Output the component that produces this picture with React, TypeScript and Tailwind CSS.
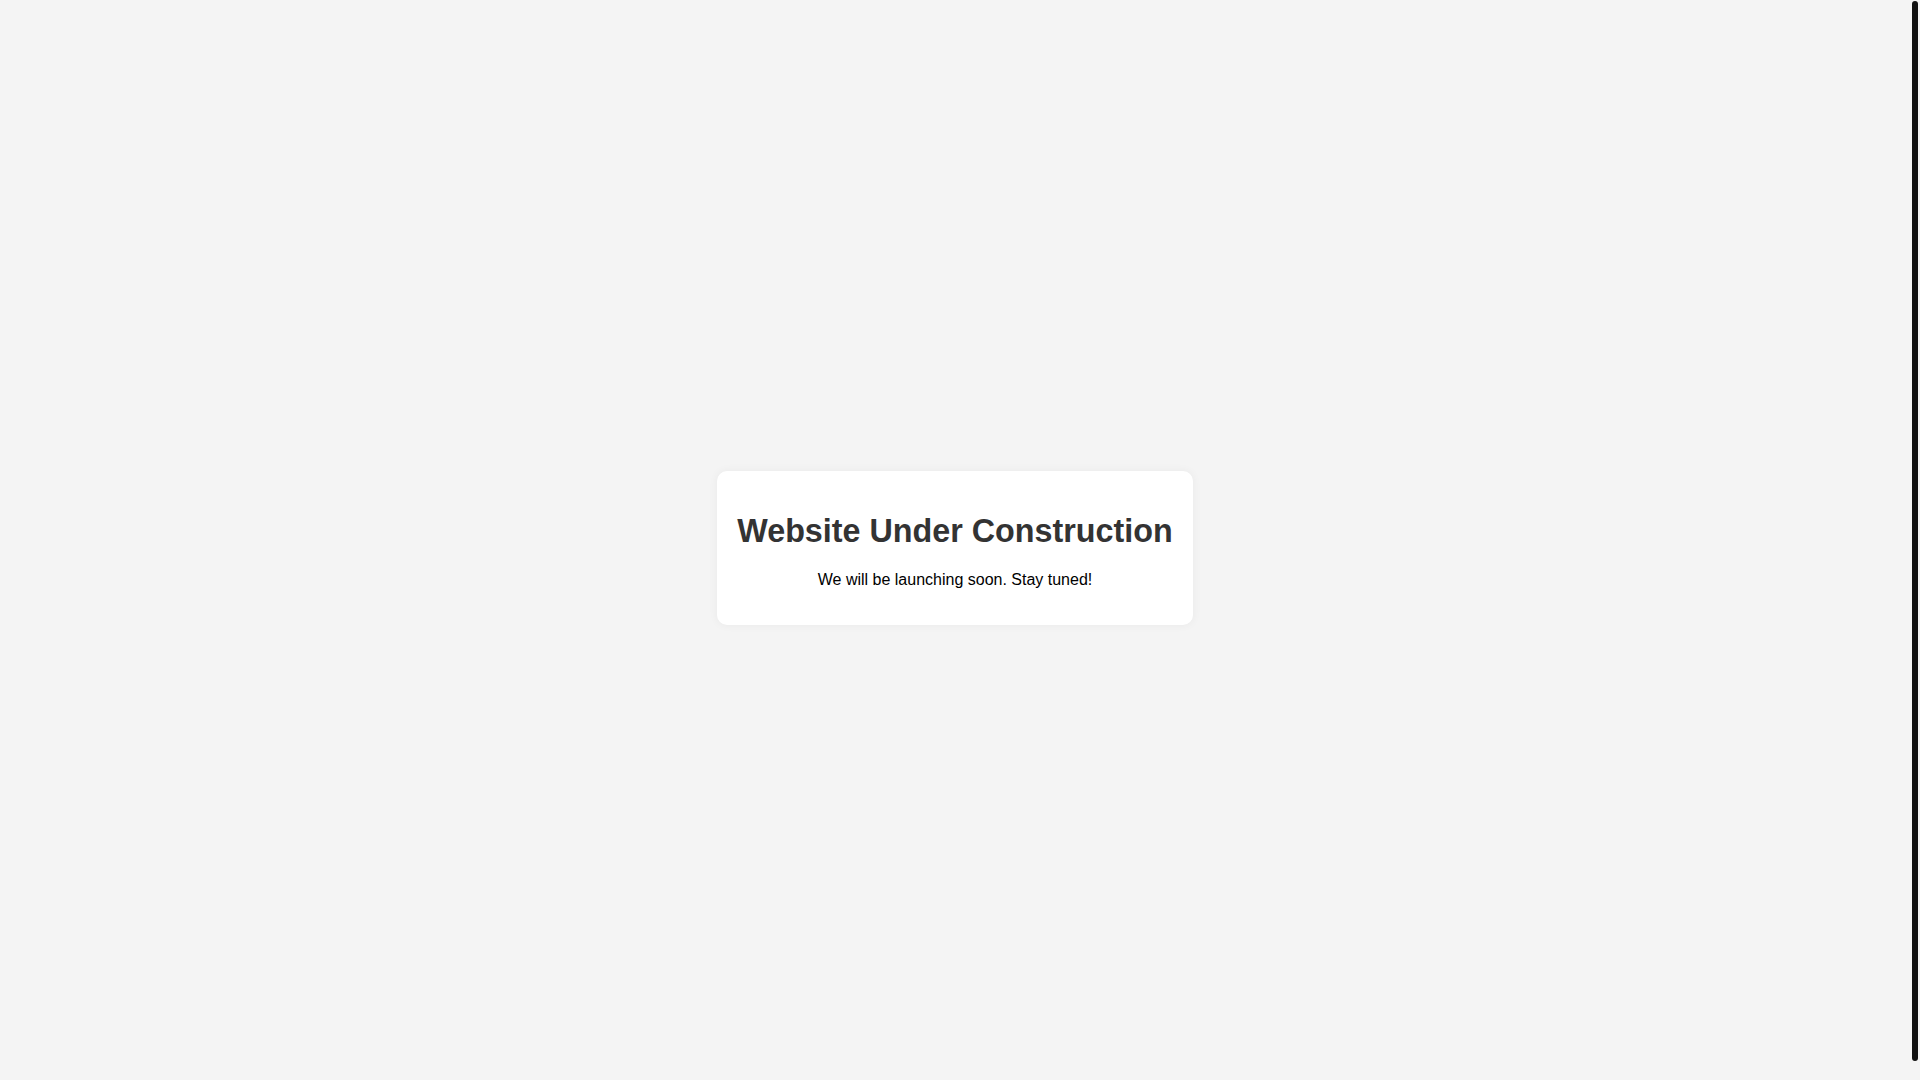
export default function App() {
  return (
    <div className="flex h-screen overflow-hidden bg-[#f4f4f4] font-['Liberation_Sans',Arial,sans-serif]">
      <main className="flex flex-1 items-center justify-center pt-4">
        <div className="rounded-[10px] bg-white p-5 text-center shadow-[0_0_10px_rgba(0,0,0,0.05)]">
          <h1 className="my-[21.44px] text-[32.3px] font-bold leading-[36.8px] text-[#333]">
            Website Under Construction
          </h1>
          <p className="my-4 text-base leading-[normal] text-black">
            We will be launching soon. Stay tuned!
          </p>
        </div>
      </main>
      {/* page scrollbar */}
      <div className="w-[10px] shrink-0 px-[2px] py-[1px]">
        <div className="h-[1060px] rounded-[3px] bg-[#111]" />
      </div>
    </div>
  )
}
